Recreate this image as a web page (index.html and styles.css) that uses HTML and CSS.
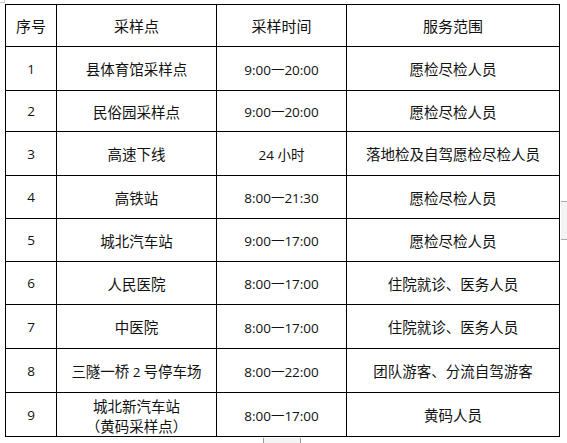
FILE: index.html
```html
<!DOCTYPE html>
<html lang="zh">
<head>
<meta charset="utf-8">
<link rel="stylesheet" href="styles.css">
</head>
<body>
<div class="page">
  <div class="grid">
    <div class="c h">序号</div><div class="c h">采样点</div><div class="c h">采样时间</div><div class="c h">服务范围</div>
    <div class="c n">1</div><div class="c">县体育馆采样点</div><div class="c t">9:00一20:00</div><div class="c">愿检尽检人员</div>
    <div class="c n">2</div><div class="c">民俗园采样点</div><div class="c t">9:00一20:00</div><div class="c">愿检尽检人员</div>
    <div class="c n">3</div><div class="c">高速下线</div><div class="c t">24 小时</div><div class="c">落地检及自驾愿检尽检人员</div>
    <div class="c n">4</div><div class="c">高铁站</div><div class="c t">8:00一21:30</div><div class="c">愿检尽检人员</div>
    <div class="c n">5</div><div class="c">城北汽车站</div><div class="c t">9:00一17:00</div><div class="c">愿检尽检人员</div>
    <div class="c n">6</div><div class="c">人民医院</div><div class="c t">8:00一17:00</div><div class="c">住院就诊、医务人员</div>
    <div class="c n">7</div><div class="c">中医院</div><div class="c t">8:00一17:00</div><div class="c">住院就诊、医务人员</div>
    <div class="c n">8</div><div class="c"><span>三隧一桥 <span class="d">2</span> 号停车场</span></div><div class="c t">8:00一22:00</div><div class="c">团队游客、分流自驾游客</div>
    <div class="c n">9</div><div class="c two"><span>城北新汽车站</span><span>（黄码采样点）</span></div><div class="c t">8:00一17:00</div><div class="c">黄码人员</div>
  </div>
  <div class="mark mark-right"></div>
  <div class="mark mark-bottom"></div>
  <div class="mark mark-corner"></div>
</div>
</body>
</html>
```
FILE: styles.css
```css
html, body {
  margin: 0;
  padding: 0;
  background: #fff;
}
.page {
  position: relative;
  width: 567px;
  height: 443px;
  padding: 4px 0 0 5px;
  box-sizing: border-box;
  overflow: hidden;
}
.grid {
  display: grid;
  grid-template-columns: 50px 159px 129px 212px;
  grid-template-rows: 41px 43px 40px 43px 42px 42px 42px 43px 43px 43px;
  gap: 1px;
  padding: 1px;
  background: #000;
  width: max-content;
}
.c {
  background: #fff;
  display: flex;
  align-items: center;
  justify-content: center;
  font-family: "Noto Sans CJK SC", "Liberation Sans", sans-serif;
  font-size: 14.5px;
  color: #111;
  white-space: nowrap;
}
.n, .t, .d {
  font-family: "Open Sans", "Liberation Sans", "Noto Sans CJK SC", sans-serif;
  font-size: 13.5px;
}
.c.h {
  font-size: 15px;
}
.two {
  flex-direction: column;
  line-height: 20px;
  padding-top: 2px;
}
.mark {
  position: absolute;
  background: #f4f4f4;
}
.mark-right {
  left: 561px;
  top: 201px;
  width: 6px;
  height: 37px;
  border-top: 1px solid #aaa;
  border-bottom: 1px solid #aaa;
}
.mark-bottom {
  left: 263px;
  top: 438px;
  width: 36px;
  height: 5px;
  border-left: 1px solid #999;
  border-right: 1px solid #999;
}
.mark-corner {
  left: 0;
  top: 0;
  width: 4px;
  height: 2px;
  border-right: 1px solid #ccc;
  border-bottom: 1px solid #ccc;
  background: #fff;
}
```
